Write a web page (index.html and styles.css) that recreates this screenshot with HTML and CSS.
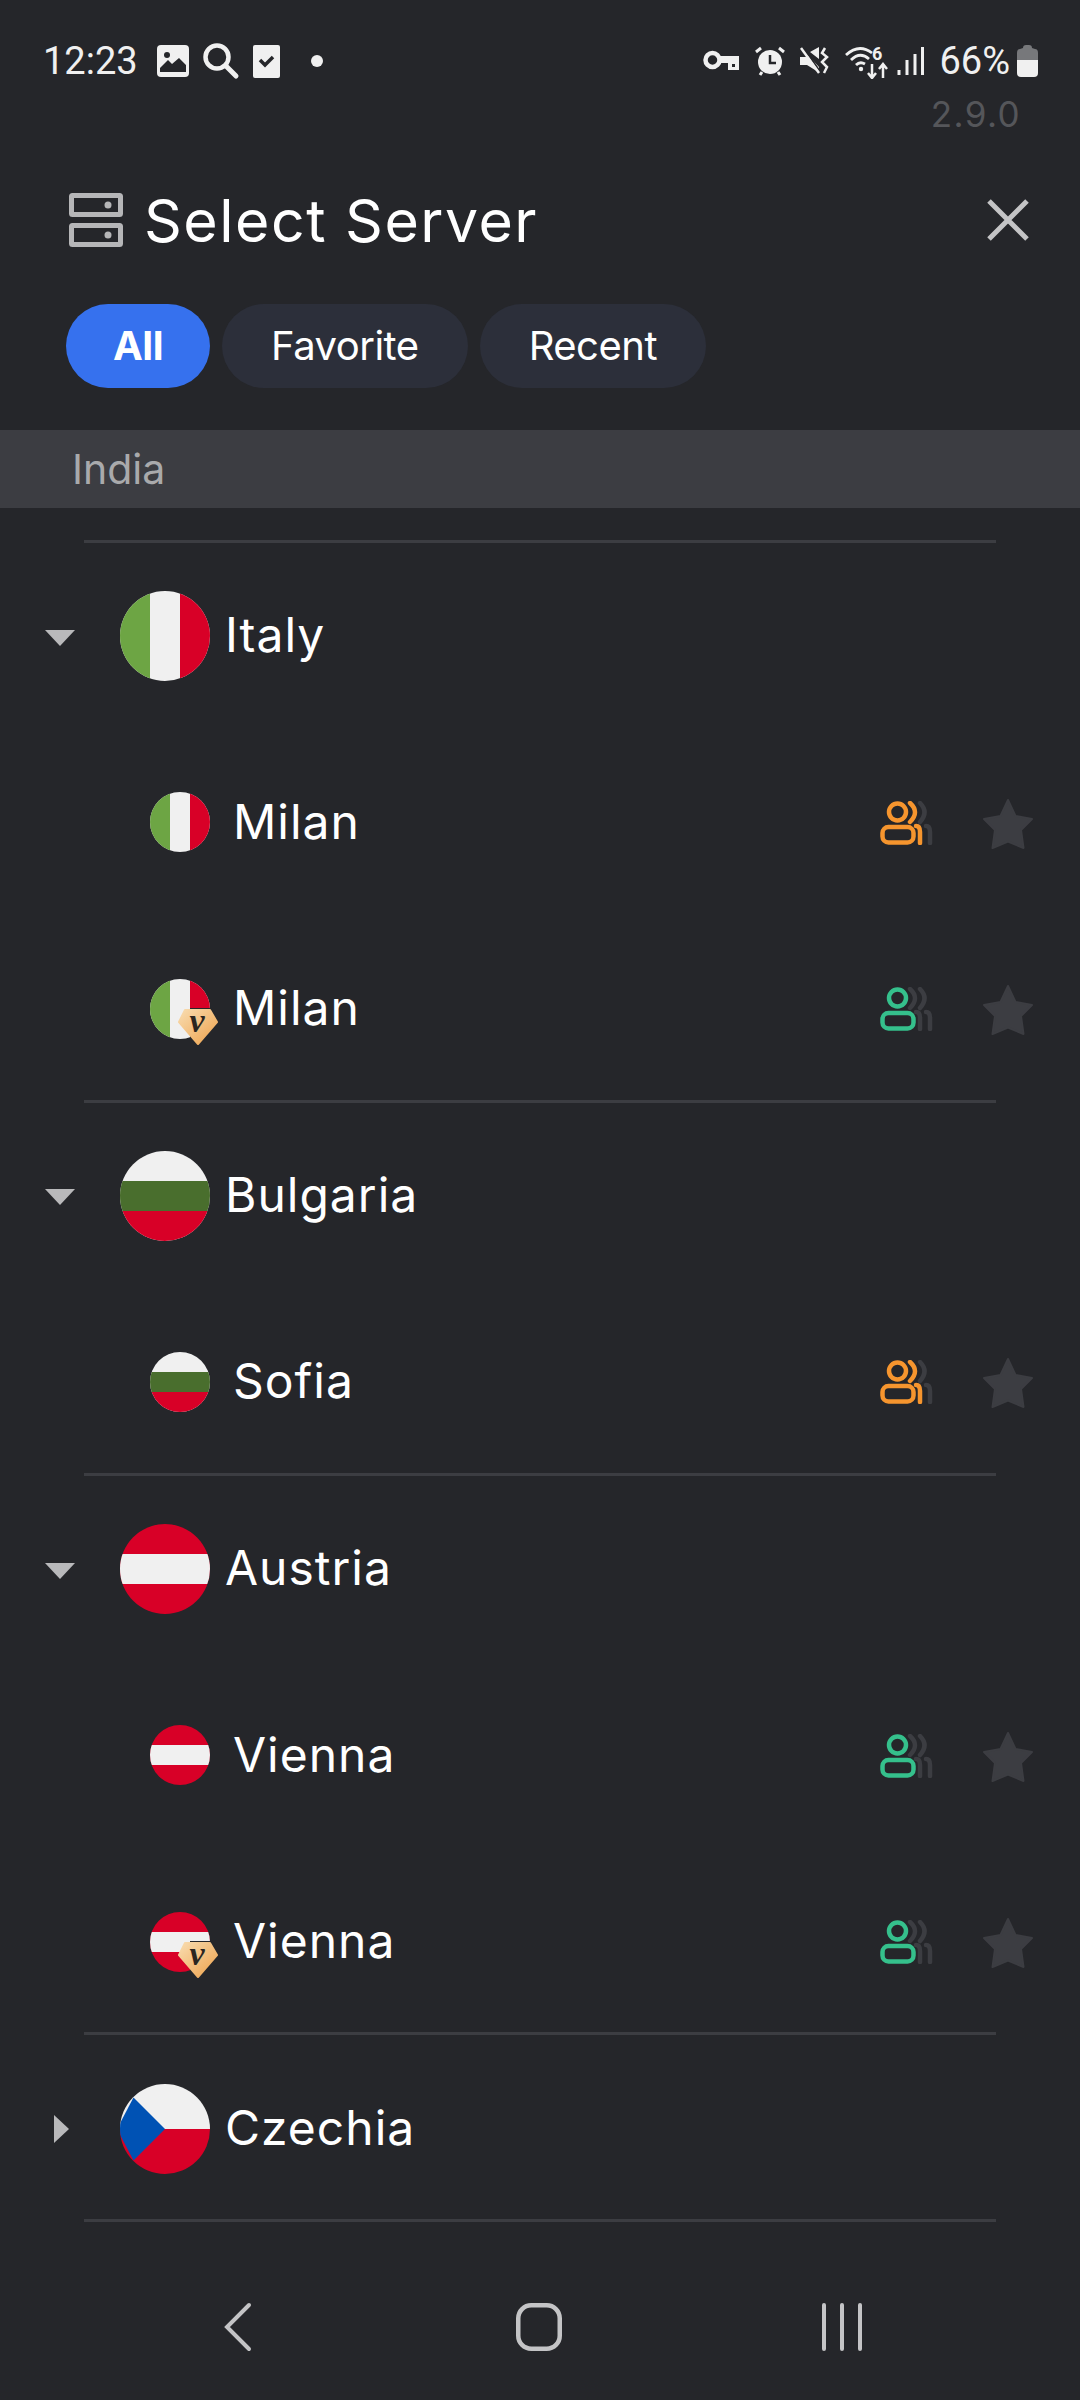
FILE: index.html
```html
<!DOCTYPE html>
<html lang="en">

<head>
    <meta charset="UTF-8">
    <meta name="viewport" content="width=device-width, initial-scale=1.0">
    <title>Select Server</title>
    <link rel="stylesheet" href="styles.css">
</head>

<body>
    <svg class="defs" width="0" height="0">
        <defs>
            <clipPath id="disc"><circle cx="30" cy="30" r="30" /></clipPath>
            <linearGradient id="gold" x1="0" y1="0" x2="1" y2="1">
                <stop offset="0" stop-color="#f8dcb0" />
                <stop offset="1" stop-color="#eea24c" />
            </linearGradient>
            <symbol id="flag-it" viewBox="0 0 60 60">
                <g clip-path="url(#disc)">
                    <rect width="60" height="60" fill="#f0f0f0" />
                    <rect width="20" height="60" fill="#6da544" />
                    <rect x="40" width="20" height="60" fill="#d80027" />
                </g>
            </symbol>
            <symbol id="flag-bg" viewBox="0 0 60 60">
                <g clip-path="url(#disc)">
                    <rect width="60" height="60" fill="#f0f0f0" />
                    <rect y="20" width="60" height="20" fill="#496e2d" />
                    <rect y="40" width="60" height="20" fill="#d80027" />
                </g>
            </symbol>
            <symbol id="flag-at" viewBox="0 0 60 60">
                <g clip-path="url(#disc)">
                    <rect width="60" height="60" fill="#d80027" />
                    <rect y="20" width="60" height="20" fill="#f0f0f0" />
                </g>
            </symbol>
            <symbol id="flag-cz" viewBox="0 0 60 60">
                <g clip-path="url(#disc)">
                    <rect width="60" height="30" fill="#f0f0f0" />
                    <rect y="30" width="60" height="30" fill="#d80027" />
                    <path d="M9 9 L30 30 L9 51 L-2 30 Z" fill="#0052b4" />
                </g>
            </symbol>
            <symbol id="star" viewBox="0 0 50 50">
                <path d="M25 1 L32.5 17 L49 20 L38 31 L40.5 49 L25 42.5 L9.5 49 L12 31 L1 20 L17.5 17 Z" fill="#3c3d42" stroke="#3c3d42" stroke-width="2" stroke-linejoin="round" />
            </symbol>
            <symbol id="user-head" viewBox="0 0 54 44">
                <circle cx="17.5" cy="11" r="8.5" fill="none" stroke="currentColor" stroke-width="4.5" />
                <rect x="2.5" y="26" width="31" height="15.5" rx="6" fill="none" stroke="currentColor" stroke-width="4.5" />
            </symbol>
            <symbol id="user-mid" viewBox="0 0 54 44">
                <path d="M30 2 Q40 11 30 21 M36 25 Q40 25 40 31 L40 42" fill="none" stroke="currentColor" stroke-width="4.5" stroke-linecap="round" />
            </symbol>
            <symbol id="user-back" viewBox="0 0 54 44">
                <path d="M40 2 Q49 11 40 21 M46 25 Q50 25 50 31 L50 42" fill="none" stroke="currentColor" stroke-width="4.5" stroke-linecap="round" />
            </symbol>
            <symbol id="badge" viewBox="0 0 40 38">
                <rect x="12" width="28" height="38" fill="#25262a" />
                <path d="M7 2 L32 2 L39 14 L20 36 L1 14 Z" fill="url(#gold)" stroke="url(#gold)" stroke-width="2" stroke-linejoin="round" />
                <text x="19" y="24" class="badge-v">v</text>
            </symbol>
        </defs>
    </svg>

    <div class="status">
        <div class="status-left">
            <span class="time">12:23</span>
            <svg class="st-icon" width="32" height="32" viewBox="0 0 32 32">
                <rect width="32" height="32" rx="4" fill="#f0f0f0" />
                <circle cx="10" cy="10" r="3" fill="#25262a" />
                <path d="M3 27 L3 23 L11 15 L15 19 L22 13 L29 20 L29 27 Z" fill="#25262a" />
            </svg>
            <svg class="st-icon" width="38" height="38" viewBox="0 0 38 38">
                <circle cx="15" cy="15" r="11.5" fill="none" stroke="#f0f0f0" stroke-width="4.5" />
                <path d="M24 24 L34 34" stroke="#f0f0f0" stroke-width="5" stroke-linecap="round" />
            </svg>
            <svg class="st-icon" width="27" height="33" viewBox="0 0 27 33">
                <rect width="27" height="33" rx="2" fill="#f0f0f0" />
                <path d="M7 15 L12 20 L20 12" fill="none" stroke="#25262a" stroke-width="3.5" />
            </svg>
            <span class="dot"></span>
        </div>
        <div class="status-right">
            <svg width="37" height="22" viewBox="0 0 37 22">
                <circle cx="9.5" cy="10" r="7" fill="none" stroke="#f0f0f0" stroke-width="4.5" />
                <path d="M15 6 L36 6 L36 20 L25 20 L25 13 L15 13 Z" fill="#f0f0f0" />
                <rect x="29" y="14" width="3" height="3" fill="#25262a" />
            </svg>
            <svg width="30" height="30" viewBox="0 0 30 30">
                <circle cx="15" cy="16" r="12" fill="#f0f0f0" />
                <path d="M15 9 L15 17 L21 17" fill="none" stroke="#25262a" stroke-width="2.5" />
                <path d="M1 6 L6 2 M29 6 L24 2 M5 29 L7 26 M25 29 L23 26" stroke="#f0f0f0" stroke-width="3" />
            </svg>
            <svg width="30" height="30" viewBox="0 0 30 30">
                <path d="M0 11 L6 11 L8 9 L19 21 L19 27 L15 24 L7 19 L0 19 Z M10 6 L19 1 L19 13 Z" fill="#f0f0f0" />
                <path d="M3 1 L21 27" stroke="#25262a" stroke-width="2" />
                <path d="M1 2 L19 27" stroke="#f0f0f0" stroke-width="2.5" />
                <path d="M25 2 L22 7 L27 11 L22 16 L27 21 L24 27" fill="none" stroke="#f0f0f0" stroke-width="2.5" />
            </svg>
            <svg width="44" height="36" viewBox="0 0 44 36">
                <path d="M1 12 Q14 0 27 10 M6 17 Q15 8 24 16 M11 22 Q15 18 20 21" fill="none" stroke="#f0f0f0" stroke-width="2.8" />
                <circle cx="16" cy="26" r="2.2" fill="#f0f0f0" />
                <text x="27" y="17" class="wifi-six">6</text>
                <path d="M27 21 L27 34 M23 30 L27 35 L31 30 M38 35 L38 22 M34 26 L38 21 L42 26" fill="none" stroke="#f0f0f0" stroke-width="2.5" />
            </svg>
            <svg class="signal" width="27" height="28" viewBox="0 0 27 28">
                <path d="M2 23 L2 28 M10 13 L10 28 M18 7 L18 28 M25.5 0 L25.5 28" stroke="#f0f0f0" stroke-width="3" />
            </svg>
            <span class="battery-text">66%</span>
            <svg width="21" height="32" viewBox="0 0 21 32">
                <path d="M6 3 Q6 0 9 0 L12 0 Q15 0 15 3 L18 4 Q21 4 21 8 L21 15 L0 15 L0 8 Q0 4 3 4 Z" fill="#77787b" />
                <path d="M0 15 L21 15 L21 28 Q21 32 17 32 L4 32 Q0 32 0 28 Z" fill="#f0f0f0" />
            </svg>
        </div>
    </div>

    <div class="version">2.9.0</div>

    <header class="head">
        <svg class="head-icon" width="54" height="54" viewBox="0 0 54 54">
            <rect x="2.5" y="2.5" width="49" height="19" fill="none" stroke="#b6b6b8" stroke-width="5" rx="1" />
            <rect x="2.5" y="32.5" width="49" height="19" fill="none" stroke="#b6b6b8" stroke-width="5" rx="1" />
            <circle cx="39" cy="12" r="3.5" fill="#b6b6b8" />
            <circle cx="39" cy="42" r="3.5" fill="#b6b6b8" />
        </svg>
        <h1 class="title">Select Server</h1>
        <svg class="close" width="42" height="42" viewBox="0 0 42 42">
            <path d="M2 2 L40 40 M40 2 L2 40" stroke="#c4c4c6" stroke-width="5" />
        </svg>
    </header>

    <nav class="tabs">
        <div class="tab active">All</div>
        <div class="tab">Favorite</div>
        <div class="tab">Recent</div>
    </nav>

    <div class="section-bar">India</div>

    <main class="list">
        <section class="group">
            <div class="country">
                <span class="caret down"></span>
                <svg class="flag-big"><use href="#flag-it" /></svg>
                <span class="country-name">Italy</span>
            </div>
            <div class="city">
                <div class="city-flag"><svg class="flag-small"><use href="#flag-it" /></svg></div>
                <span class="city-name">Milan</span>
                <svg class="load orange"><use href="#user-back" class="off" /><use href="#user-mid" /><use href="#user-head" /></svg>
                <svg class="star"><use href="#star" /></svg>
            </div>
            <div class="city">
                <div class="city-flag"><svg class="flag-small"><use href="#flag-it" /></svg><svg class="badge"><use href="#badge" /></svg></div>
                <span class="city-name">Milan</span>
                <svg class="load green"><use href="#user-back" class="off" /><use href="#user-mid" class="off" /><use href="#user-head" /></svg>
                <svg class="star"><use href="#star" /></svg>
            </div>
        </section>

        <section class="group">
            <div class="country">
                <span class="caret down"></span>
                <svg class="flag-big"><use href="#flag-bg" /></svg>
                <span class="country-name">Bulgaria</span>
            </div>
            <div class="city">
                <div class="city-flag"><svg class="flag-small"><use href="#flag-bg" /></svg></div>
                <span class="city-name">Sofia</span>
                <svg class="load orange"><use href="#user-back" class="off" /><use href="#user-mid" /><use href="#user-head" /></svg>
                <svg class="star"><use href="#star" /></svg>
            </div>
        </section>

        <section class="group">
            <div class="country">
                <span class="caret down"></span>
                <svg class="flag-big"><use href="#flag-at" /></svg>
                <span class="country-name">Austria</span>
            </div>
            <div class="city">
                <div class="city-flag"><svg class="flag-small"><use href="#flag-at" /></svg></div>
                <span class="city-name">Vienna</span>
                <svg class="load green"><use href="#user-back" class="off" /><use href="#user-mid" class="off" /><use href="#user-head" /></svg>
                <svg class="star"><use href="#star" /></svg>
            </div>
            <div class="city">
                <div class="city-flag"><svg class="flag-small"><use href="#flag-at" /></svg><svg class="badge"><use href="#badge" /></svg></div>
                <span class="city-name">Vienna</span>
                <svg class="load green"><use href="#user-back" class="off" /><use href="#user-mid" class="off" /><use href="#user-head" /></svg>
                <svg class="star"><use href="#star" /></svg>
            </div>
        </section>

        <section class="group">
            <div class="country">
                <span class="caret right"></span>
                <svg class="flag-big"><use href="#flag-cz" /></svg>
                <span class="country-name">Czechia</span>
            </div>
        </section>

        <div class="divider"></div>
    </main>

    <footer class="navbar">
        <svg width="30" height="50" viewBox="0 0 30 50">
            <path d="M27 3 L5 25 L27 47" fill="none" stroke="#c4c4c6" stroke-width="4" stroke-linecap="round" />
        </svg>
        <svg class="nav-home" width="46" height="48" viewBox="0 0 46 48">
            <rect x="2.25" y="2.25" width="41.5" height="43.5" rx="13" fill="none" stroke="#c4c4c6" stroke-width="4.5" />
        </svg>
        <svg width="42" height="48" viewBox="0 0 42 48">
            <path d="M3 2 L3 46 M21 2 L21 46 M39 2 L39 46" stroke="#c4c4c6" stroke-width="4" stroke-linecap="round" />
        </svg>
    </footer>
</body>

</html>
```

FILE: styles.css
```css
* {
    box-sizing: border-box;
}

body {
    margin: 0;
    width: 1080px;
    height: 2400px;
    overflow: hidden;
    background: #25262a;
    color: #fff;
    font-family: Inter, "Noto Sans", sans-serif;
    display: flex;
    flex-direction: column;
}

.defs {
    position: absolute;
}

/* status bar */
.status {
    height: 100px;
    padding: 22px 42px 0 43px;
    display: flex;
    align-items: center;
    justify-content: space-between;
    flex-shrink: 0;
}

.status-left,
.status-right {
    display: flex;
    align-items: center;
}

.time {
    font-family: Roboto, sans-serif;
    font-size: 38px;
    color: #f0f0f0;
    margin-right: 19px;
}

.st-icon {
    margin-right: 13px;
}

.dot {
    width: 12px;
    height: 12px;
    border-radius: 50%;
    background: #f0f0f0;
    margin-left: 18px;
}

.status-right {
    gap: 15px;
}

.signal {
    margin-left: -7px;
}

.battery-text {
    font-family: Roboto, sans-serif;
    font-size: 38px;
    color: #f0f0f0;
    margin-right: -8px;
}

.wifi-six {
    font-family: Roboto, sans-serif;
    font-size: 18px;
    font-weight: 700;
    fill: #f0f0f0;
}

.version {
    height: 30px;
    margin-top: -1px;
    padding-right: 59px;
    text-align: right;
    font-size: 35px;
    line-height: 30px;
    color: #55565a;
    letter-spacing: 1.4px;
}

/* header */
.head {
    height: 80px;
    margin-top: 51px;
    padding: 0 30px 0 69px;
    display: flex;
    align-items: center;
}

.head-icon {
    flex-shrink: 0;
}

.title {
    margin: 0 0 0 21px;
    font-size: 59px;
    font-weight: 400;
    letter-spacing: 1.5px;
    flex: 1;
}

.close {
    margin-right: 21px;
}

/* tabs */
.tabs {
    margin-top: 44px;
    padding-left: 66px;
    display: flex;
    gap: 12px;
}

.tab {
    height: 84px;
    padding: 0 49px;
    border-radius: 42px;
    background: #2c2f3a;
    font-size: 40px;
    line-height: 84px;
    letter-spacing: -0.5px;
}

.tab.active {
    padding: 0 47px;
    background: #3671ee;
    font-weight: 700;
}

.section-bar {
    height: 78px;
    margin-top: 42px;
    padding-left: 72px;
    background: #3c3d42;
    color: #a9aaac;
    font-size: 41px;
    line-height: 78px;
}

/* server list */
.list {
    padding-top: 32px;
}

.group {
    border-top: 3px solid #3c3d42;
    margin: 0 84px;
}

.divider {
    height: 3px;
    margin: 0 84px;
    background: #3c3d42;
}

.country,
.city {
    height: 186.56px;
    margin: 0 -84px;
    padding-top: 3px;
    display: flex;
    align-items: center;
}

.group > .country {
    margin-top: -3px;
}

.caret {
    width: 0;
    height: 0;
    flex-shrink: 0;
}

.caret.down {
    margin-left: 45px;
    margin-right: 1px;
    margin-top: 6px;
    border-left: 15px solid transparent;
    border-right: 15px solid transparent;
    border-top: 16px solid #b9b9bb;
}

.caret.right {
    margin-left: 54px;
    margin-right: 7px;
    margin-top: 4px;
    border-top: 14px solid transparent;
    border-bottom: 14px solid transparent;
    border-left: 15px solid #b9b9bb;
}

.flag-big {
    width: 90px;
    height: 90px;
    margin-left: 44px;
    margin-top: 3px;
    flex-shrink: 0;
}

.country-name {
    margin-left: 15px;
    font-size: 48px;
    letter-spacing: 1px;
}

.city {
    padding-left: 150px;
}

.city-flag {
    width: 60px;
    height: 60px;
    margin-top: 2px;
    position: relative;
    flex-shrink: 0;
}

.flag-small {
    display: block;
    width: 60px;
    height: 60px;
}

.badge {
    position: absolute;
    left: 28px;
    top: 29px;
    width: 40px;
    height: 38px;
}

.badge-v {
    font-family: "Liberation Serif", serif;
    font-size: 34px;
    font-weight: 700;
    font-style: italic;
    fill: #2b2620;
    text-anchor: middle;
}

.city-name {
    margin-left: 23px;
    font-size: 48px;
    letter-spacing: 1px;
    flex: 1;
}

.load {
    width: 54px;
    height: 44px;
    margin-right: 49px;
    margin-top: 3px;
    flex-shrink: 0;
}

.load.orange {
    color: #f6952e;
}

.load.green {
    color: #35c08c;
}

.off {
    color: #3c3d42;
}

.star {
    width: 50px;
    height: 50px;
    margin-right: 47px;
    margin-top: 5px;
    flex-shrink: 0;
}

/* android nav */
.navbar {
    margin-top: auto;
    height: 146px;
    padding: 0 217px 0 222px;
    display: flex;
    align-items: center;
    justify-content: space-between;
    flex-shrink: 0;
}

.nav-home {
    margin-left: 5px;
}
```
